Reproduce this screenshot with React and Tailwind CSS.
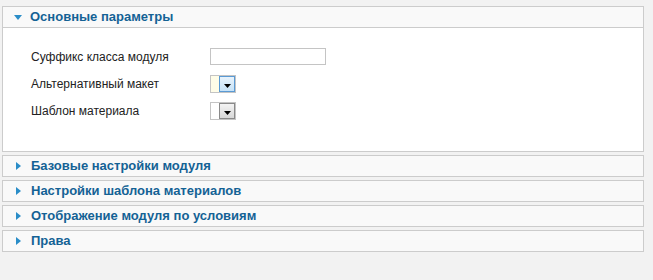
const sections = [
  'Базовые настройки модуля',
  'Настройки шаблона материалов',
  'Отображение модуля по условиям',
  'Права',
];

function Tri({ open }) {
  return open ? (
    <svg width="8" height="5" viewBox="0 0 8 5" className="mr-[8px]">
      <path d="M0 0h8L4 5z" fill="#2a8dc8" />
    </svg>
  ) : (
    <svg width="5" height="8" viewBox="0 0 5 8" className="mr-[10px] ml-[1px]">
      <path d="M0 0l5 4-5 4z" fill="#2a8dc8" />
    </svg>
  );
}

function Select({ active }) {
  return (
    <div className={`flex h-[18px] w-[26px] border ${active ? 'border-[#c4c4c4] bg-[#fffde8]' : 'border-[#c4c4c4] bg-white'}`}>
      <div className="flex-1" />
      <div
        className={`flex w-[16px] items-end justify-center pb-[3px] border ${
          active
            ? 'border-[#5a9ad4] bg-gradient-to-b from-[#e8f3fc] to-[#c6e2f7]'
            : 'border-[#8a8a8a] bg-gradient-to-b from-[#f4f4f4] to-[#d8d8d8]'
        }`}
      >
        <svg width="7" height="4" viewBox="0 0 7 4">
          <path d="M0 0h7L3.5 4z" fill="#000" />
        </svg>
      </div>
    </div>
  );
}

export default function App() {
  return (
    <div className="h-[280px] w-[653px] bg-[#f2f2f2] pl-[2px] pr-[9px] pt-[6px] font-['Liberation_Sans',Arial,sans-serif]">
      <div className="border border-[#cccccc] bg-white">
        <div className="flex h-[21px] items-center border-b border-[#cccccc] bg-[#f9f9f9] pl-[11px] text-[13px] font-bold text-[#146295]">
          <Tri open />
          Основные параметры
        </div>
        <div className="h-[123px] pl-[28px] pt-[20px] text-[12px] text-[#222]">
          <div className="flex h-[17px] items-center">
            <span className="w-[179px]">Суффикс класса модуля</span>
            <div className="h-[17px] w-[116px] border border-[#c4c4c4] bg-white" />
          </div>
          <div className="mt-[10px] flex h-[18px] items-center">
            <span className="w-[179px]">Альтернативный макет</span>
            <Select active />
          </div>
          <div className="mt-[9px] flex h-[18px] items-center">
            <span className="w-[179px]">Шаблон материала</span>
            <Select />
          </div>
        </div>
      </div>
      <div className="mt-[3px] flex flex-col gap-[3px]">
        {sections.map((s) => (
          <div
            key={s}
            className="flex h-[22px] items-center border border-[#cccccc] bg-[#f9f9f9] pl-[12px] text-[13px] font-bold text-[#146295]"
          >
            <Tri />
            {s}
          </div>
        ))}
      </div>
    </div>
  );
}
